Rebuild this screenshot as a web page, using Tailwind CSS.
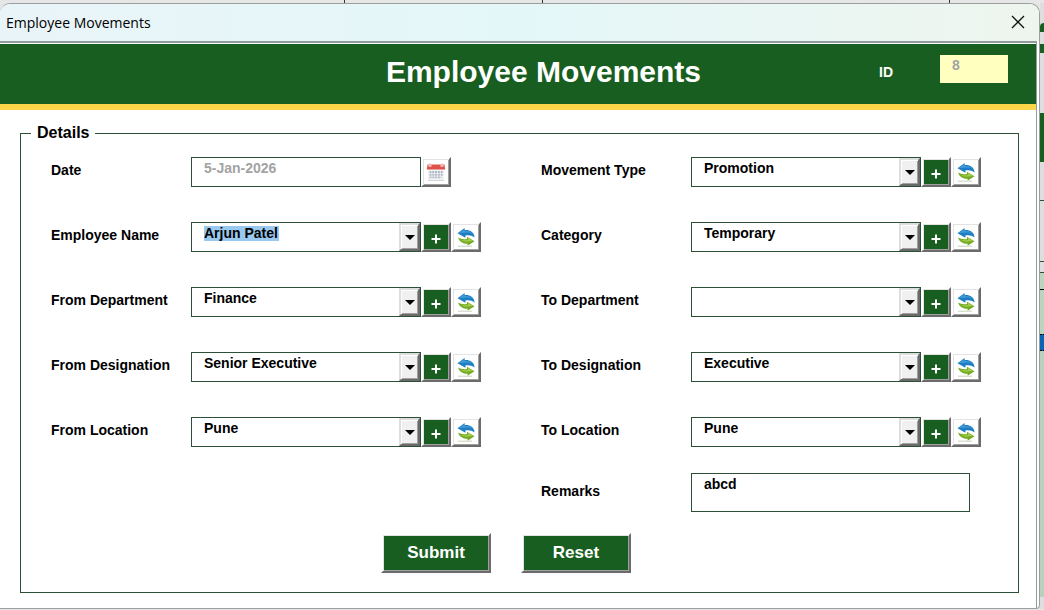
<!DOCTYPE html>
<html lang="en">
<head>
    <meta charset="UTF-8">
    <meta name="viewport" content="width=device-width, initial-scale=1.0">
    <title>Employee Movements</title>
    <script src="https://cdn.jsdelivr.net/npm/@tailwindcss/browser@4"></script>
</head>
<body class="min-h-screen overflow-hidden bg-[#e6e6e6] font-['Liberation_Sans',Arial,sans-serif] text-sm font-bold text-black">
    <!-- Shared icons -->
    <svg class="hidden">
        <symbol id="icon-refresh" viewBox="0 0 20 20">
            <path d="M1.500 6.200 8.600 1v2.200C13 2.600 18.200 4.600 18.600 10.600 16 8.300 13 7.900 9.400 8.400v2.400z" fill="#1f7dc4"/>
            <path d="M2.500 6 8.200 2v2c4-.5 7 .6 9 3-3-1.600-6-1.700-9-1.200z" fill="#3f9ad6"/>
            <path d="M18.500 14.200 11.600 18.800v-2C7.500 16.900 3.500 15.400 2 10.600c3 1.700 6 2 9 1.400V9.800z" fill="#74ab24"/>
            <path d="M17 14l-5-3.200v2.200c-2.500.5-5 .3-7.500-.6 2 1.800 4.500 2.400 7.500 2.200z" fill="#a3cc4a"/>
            <path d="M2 19.200h14" stroke="#b9c8a8" stroke-width=".8"/>
        </symbol>
        <symbol id="icon-arrow" viewBox="0 0 10 5">
            <path d="M0 0h10L5 5z" fill="#000"/>
        </symbol>
        <symbol id="icon-plus" viewBox="0 0 10 10">
            <path d="M5 .5v9M.5 5h9" stroke="#fff" stroke-width="2"/>
        </symbol>
    </svg>

    <!-- Sheet column lines above the window -->
    <div class="flex h-[3px]">
        <div class="w-[33%] border-r border-[#333]"></div>
        <div class="w-[19%] border-r border-[#333]"></div>
        <div class="w-[39%] border-r border-[#333]"></div>
    </div>

    <div class="flex">
        <!-- Window -->
        <div class="min-w-0 flex-1 rounded-t-[10px] rounded-br border-t border-r border-b border-[#9a9f9f] bg-white pr-0.5">
            <header class="-mr-0.5 flex h-[37px] items-center justify-between rounded-t-[10px] bg-linear-to-r from-[#e9f4f9] via-[#e4f7f8] to-[#eef5ee] pr-3.5 pl-1.5">
                <span class="font-['Open_Sans','Noto_Sans',sans-serif] text-sm font-normal">Employee Movements</span>
                <button type="button" aria-label="Close" class="pb-0.5">
                    <svg class="size-3.5" viewBox="0 0 14 14"><path d="M1 1l12 12M13 1 1 13" stroke="#111" stroke-width="1.300" fill="none"/></svg>
                </button>
            </header>

            <main class="border-t-2 border-r border-[#939c9c] pt-px">
                <!-- Title -->
                <div class="flex h-[66px] items-center border-b-[6px] border-[#fcd549] bg-[#185e20] pr-7 text-white">
                    <h1 class="flex-1 pb-1 pl-[208px] text-center text-[30px] leading-8">Employee Movements</h1>
                    <label for="record-id" class="w-[61px] pb-1">ID</label>
                    <input id="record-id" type="text" value="8" disabled class="mb-2.5 h-7 w-[68px] bg-[#ffffc0] px-3 pb-2 text-[#a3a3a3]">
                </div>

                <form class="flow-root">
                    <fieldset class="mt-[13px] mr-[17px] mb-[15px] ml-5 border border-[#2c4f38] pt-3.5 pr-[37px] pb-[19px] pl-[30px]">
                        <legend class="-ml-5 px-1.5 text-base leading-5">Details</legend>

                        <div class="grid grid-cols-[43fr_44fr] gap-x-[60px] gap-y-[35px]">
                            <!-- Date / Movement Type -->
                            <div class="flex items-center">
                                <label for="date" class="w-[140px] pb-1">Date</label>
                                <input id="date" type="text" value="5-Jan-2026" disabled class="h-[30px] min-w-0 flex-1 border border-[#2c4f38] px-3 pb-2 text-[#a3a3a3]">
                                <button type="button" aria-label="Pick date" class="mr-[30px] grid size-[30px] place-items-center border-2 border-white border-r-[#6b6b6b] border-b-[#6b6b6b] bg-white shadow-[inset_1px_1px_#e3e3e3,inset_-1px_-1px_#a0a0a0]">
                                    <svg class="size-5" viewBox="0 0 20 20">
                                        <path d="M2 6h16v12.500H2z" fill="#f3f3f6"/>
                                        <path d="M1.500 2.500h17l.7 5H.8z" fill="#df5248"/>
                                        <path d="M3.500 10h13.500M3.500 12.700h13.500M3.500 15.400h12" stroke="#b0b8c4" stroke-width="1.900" stroke-dasharray="2 .8"/>
                                        <path d="M2 18.500h16" stroke="#d5d5d5"/>
                                        <circle cx="4" cy="3.400" r="1.800" fill="#f1b6ae"/>
                                        <circle cx="16" cy="3.400" r="1.800" fill="#f1b6ae"/>
                                    </svg>
                                </button>
                            </div>
                            <div class="flex items-center">
                                <label for="movement-type" class="w-[150px] pb-1">Movement Type</label>
                                <div class="relative min-w-0 flex-1">
                                    <select id="movement-type" class="block h-[30px] w-full appearance-none border border-[#2c4f38] px-3 pb-2"><option>Promotion</option></select>
                                    <span class="pointer-events-none absolute inset-y-px right-px grid w-[21px] place-items-center border-2 border-[#dedede] border-r-[#6b6b6b] border-b-[#6b6b6b] bg-[#f0f0f0] shadow-[inset_1px_1px_#fff,inset_-1px_-1px_#a0a0a0]"><svg class="h-[5px] w-2.5"><use href="#icon-arrow"/></svg></span>
                                </div>
                                <button type="button" aria-label="Add movement type" class="grid size-[30px] place-items-center border-2 border-white border-r-[#6b6b6b] border-b-[#6b6b6b] bg-[#185e20] shadow-[inset_1px_1px_#e3e3e3,inset_-1px_-1px_#a0a0a0]"><svg class="mt-1 size-2.5"><use href="#icon-plus"/></svg></button>
                                <button type="button" aria-label="Refresh movement types" class="grid size-[30px] place-items-center border-2 border-white border-r-[#6b6b6b] border-b-[#6b6b6b] bg-white shadow-[inset_1px_1px_#e3e3e3,inset_-1px_-1px_#a0a0a0]"><svg class="size-5"><use href="#icon-refresh"/></svg></button>
                            </div>

                            <!-- Employee Name / Category -->
                            <div class="flex items-center">
                                <label for="employee-name" class="w-[140px] pb-1">Employee Name</label>
                                <div class="relative min-w-0 flex-1">
                                    <select id="employee-name" class="block h-[30px] w-full appearance-none border border-[#2c4f38] bg-linear-to-r from-[#99c9ef] to-[#99c9ef] bg-size-[75px_15px] bg-position-[12px_3px] bg-no-repeat px-3 pb-2"><option>Arjun Patel</option></select>
                                    <span class="pointer-events-none absolute inset-y-px right-px grid w-[21px] place-items-center border-2 border-[#dedede] border-r-[#6b6b6b] border-b-[#6b6b6b] bg-[#f0f0f0] shadow-[inset_1px_1px_#fff,inset_-1px_-1px_#a0a0a0]"><svg class="h-[5px] w-2.5"><use href="#icon-arrow"/></svg></span>
                                </div>
                                <button type="button" aria-label="Add employee" class="grid size-[30px] place-items-center border-2 border-white border-r-[#6b6b6b] border-b-[#6b6b6b] bg-[#185e20] shadow-[inset_1px_1px_#e3e3e3,inset_-1px_-1px_#a0a0a0]"><svg class="mt-1 size-2.5"><use href="#icon-plus"/></svg></button>
                                <button type="button" aria-label="Refresh employees" class="grid size-[30px] place-items-center border-2 border-white border-r-[#6b6b6b] border-b-[#6b6b6b] bg-white shadow-[inset_1px_1px_#e3e3e3,inset_-1px_-1px_#a0a0a0]"><svg class="size-5"><use href="#icon-refresh"/></svg></button>
                            </div>
                            <div class="flex items-center">
                                <label for="category" class="w-[150px] pb-1">Category</label>
                                <div class="relative min-w-0 flex-1">
                                    <select id="category" class="block h-[30px] w-full appearance-none border border-[#2c4f38] px-3 pb-2"><option>Temporary</option></select>
                                    <span class="pointer-events-none absolute inset-y-px right-px grid w-[21px] place-items-center border-2 border-[#dedede] border-r-[#6b6b6b] border-b-[#6b6b6b] bg-[#f0f0f0] shadow-[inset_1px_1px_#fff,inset_-1px_-1px_#a0a0a0]"><svg class="h-[5px] w-2.5"><use href="#icon-arrow"/></svg></span>
                                </div>
                                <button type="button" aria-label="Add category" class="grid size-[30px] place-items-center border-2 border-white border-r-[#6b6b6b] border-b-[#6b6b6b] bg-[#185e20] shadow-[inset_1px_1px_#e3e3e3,inset_-1px_-1px_#a0a0a0]"><svg class="mt-1 size-2.5"><use href="#icon-plus"/></svg></button>
                                <button type="button" aria-label="Refresh categories" class="grid size-[30px] place-items-center border-2 border-white border-r-[#6b6b6b] border-b-[#6b6b6b] bg-white shadow-[inset_1px_1px_#e3e3e3,inset_-1px_-1px_#a0a0a0]"><svg class="size-5"><use href="#icon-refresh"/></svg></button>
                            </div>

                            <!-- Department -->
                            <div class="flex items-center">
                                <label for="from-department" class="w-[140px] pb-1">From Department</label>
                                <div class="relative min-w-0 flex-1">
                                    <select id="from-department" class="block h-[30px] w-full appearance-none border border-[#2c4f38] px-3 pb-2"><option>Finance</option></select>
                                    <span class="pointer-events-none absolute inset-y-px right-px grid w-[21px] place-items-center border-2 border-[#dedede] border-r-[#6b6b6b] border-b-[#6b6b6b] bg-[#f0f0f0] shadow-[inset_1px_1px_#fff,inset_-1px_-1px_#a0a0a0]"><svg class="h-[5px] w-2.5"><use href="#icon-arrow"/></svg></span>
                                </div>
                                <button type="button" aria-label="Add from department" class="grid size-[30px] place-items-center border-2 border-white border-r-[#6b6b6b] border-b-[#6b6b6b] bg-[#185e20] shadow-[inset_1px_1px_#e3e3e3,inset_-1px_-1px_#a0a0a0]"><svg class="mt-1 size-2.5"><use href="#icon-plus"/></svg></button>
                                <button type="button" aria-label="Refresh from departments" class="grid size-[30px] place-items-center border-2 border-white border-r-[#6b6b6b] border-b-[#6b6b6b] bg-white shadow-[inset_1px_1px_#e3e3e3,inset_-1px_-1px_#a0a0a0]"><svg class="size-5"><use href="#icon-refresh"/></svg></button>
                            </div>
                            <div class="flex items-center">
                                <label for="to-department" class="w-[150px] pb-1">To Department</label>
                                <div class="relative min-w-0 flex-1">
                                    <select id="to-department" class="block h-[30px] w-full appearance-none border border-[#2c4f38] px-3 pb-2"><option></option></select>
                                    <span class="pointer-events-none absolute inset-y-px right-px grid w-[21px] place-items-center border-2 border-[#dedede] border-r-[#6b6b6b] border-b-[#6b6b6b] bg-[#f0f0f0] shadow-[inset_1px_1px_#fff,inset_-1px_-1px_#a0a0a0]"><svg class="h-[5px] w-2.5"><use href="#icon-arrow"/></svg></span>
                                </div>
                                <button type="button" aria-label="Add to department" class="grid size-[30px] place-items-center border-2 border-white border-r-[#6b6b6b] border-b-[#6b6b6b] bg-[#185e20] shadow-[inset_1px_1px_#e3e3e3,inset_-1px_-1px_#a0a0a0]"><svg class="mt-1 size-2.5"><use href="#icon-plus"/></svg></button>
                                <button type="button" aria-label="Refresh to departments" class="grid size-[30px] place-items-center border-2 border-white border-r-[#6b6b6b] border-b-[#6b6b6b] bg-white shadow-[inset_1px_1px_#e3e3e3,inset_-1px_-1px_#a0a0a0]"><svg class="size-5"><use href="#icon-refresh"/></svg></button>
                            </div>

                            <!-- Designation -->
                            <div class="flex items-center">
                                <label for="from-designation" class="w-[140px] pb-1">From Designation</label>
                                <div class="relative min-w-0 flex-1">
                                    <select id="from-designation" class="block h-[30px] w-full appearance-none border border-[#2c4f38] px-3 pb-2"><option>Senior Executive</option></select>
                                    <span class="pointer-events-none absolute inset-y-px right-px grid w-[21px] place-items-center border-2 border-[#dedede] border-r-[#6b6b6b] border-b-[#6b6b6b] bg-[#f0f0f0] shadow-[inset_1px_1px_#fff,inset_-1px_-1px_#a0a0a0]"><svg class="h-[5px] w-2.5"><use href="#icon-arrow"/></svg></span>
                                </div>
                                <button type="button" aria-label="Add from designation" class="grid size-[30px] place-items-center border-2 border-white border-r-[#6b6b6b] border-b-[#6b6b6b] bg-[#185e20] shadow-[inset_1px_1px_#e3e3e3,inset_-1px_-1px_#a0a0a0]"><svg class="mt-1 size-2.5"><use href="#icon-plus"/></svg></button>
                                <button type="button" aria-label="Refresh from designations" class="grid size-[30px] place-items-center border-2 border-white border-r-[#6b6b6b] border-b-[#6b6b6b] bg-white shadow-[inset_1px_1px_#e3e3e3,inset_-1px_-1px_#a0a0a0]"><svg class="size-5"><use href="#icon-refresh"/></svg></button>
                            </div>
                            <div class="flex items-center">
                                <label for="to-designation" class="w-[150px] pb-1">To Designation</label>
                                <div class="relative min-w-0 flex-1">
                                    <select id="to-designation" class="block h-[30px] w-full appearance-none border border-[#2c4f38] px-3 pb-2"><option>Executive</option></select>
                                    <span class="pointer-events-none absolute inset-y-px right-px grid w-[21px] place-items-center border-2 border-[#dedede] border-r-[#6b6b6b] border-b-[#6b6b6b] bg-[#f0f0f0] shadow-[inset_1px_1px_#fff,inset_-1px_-1px_#a0a0a0]"><svg class="h-[5px] w-2.5"><use href="#icon-arrow"/></svg></span>
                                </div>
                                <button type="button" aria-label="Add to designation" class="grid size-[30px] place-items-center border-2 border-white border-r-[#6b6b6b] border-b-[#6b6b6b] bg-[#185e20] shadow-[inset_1px_1px_#e3e3e3,inset_-1px_-1px_#a0a0a0]"><svg class="mt-1 size-2.5"><use href="#icon-plus"/></svg></button>
                                <button type="button" aria-label="Refresh to designations" class="grid size-[30px] place-items-center border-2 border-white border-r-[#6b6b6b] border-b-[#6b6b6b] bg-white shadow-[inset_1px_1px_#e3e3e3,inset_-1px_-1px_#a0a0a0]"><svg class="size-5"><use href="#icon-refresh"/></svg></button>
                            </div>

                            <!-- Location -->
                            <div class="flex items-center">
                                <label for="from-location" class="w-[140px] pb-1">From Location</label>
                                <div class="relative min-w-0 flex-1">
                                    <select id="from-location" class="block h-[30px] w-full appearance-none border border-[#2c4f38] px-3 pb-2"><option>Pune</option></select>
                                    <span class="pointer-events-none absolute inset-y-px right-px grid w-[21px] place-items-center border-2 border-[#dedede] border-r-[#6b6b6b] border-b-[#6b6b6b] bg-[#f0f0f0] shadow-[inset_1px_1px_#fff,inset_-1px_-1px_#a0a0a0]"><svg class="h-[5px] w-2.5"><use href="#icon-arrow"/></svg></span>
                                </div>
                                <button type="button" aria-label="Add from location" class="grid size-[30px] place-items-center border-2 border-white border-r-[#6b6b6b] border-b-[#6b6b6b] bg-[#185e20] shadow-[inset_1px_1px_#e3e3e3,inset_-1px_-1px_#a0a0a0]"><svg class="mt-1 size-2.5"><use href="#icon-plus"/></svg></button>
                                <button type="button" aria-label="Refresh from locations" class="grid size-[30px] place-items-center border-2 border-white border-r-[#6b6b6b] border-b-[#6b6b6b] bg-white shadow-[inset_1px_1px_#e3e3e3,inset_-1px_-1px_#a0a0a0]"><svg class="size-5"><use href="#icon-refresh"/></svg></button>
                            </div>
                            <div class="flex items-center">
                                <label for="to-location" class="w-[150px] pb-1">To Location</label>
                                <div class="relative min-w-0 flex-1">
                                    <select id="to-location" class="block h-[30px] w-full appearance-none border border-[#2c4f38] px-3 pb-2"><option>Pune</option></select>
                                    <span class="pointer-events-none absolute inset-y-px right-px grid w-[21px] place-items-center border-2 border-[#dedede] border-r-[#6b6b6b] border-b-[#6b6b6b] bg-[#f0f0f0] shadow-[inset_1px_1px_#fff,inset_-1px_-1px_#a0a0a0]"><svg class="h-[5px] w-2.5"><use href="#icon-arrow"/></svg></span>
                                </div>
                                <button type="button" aria-label="Add to location" class="grid size-[30px] place-items-center border-2 border-white border-r-[#6b6b6b] border-b-[#6b6b6b] bg-[#185e20] shadow-[inset_1px_1px_#e3e3e3,inset_-1px_-1px_#a0a0a0]"><svg class="mt-1 size-2.5"><use href="#icon-plus"/></svg></button>
                                <button type="button" aria-label="Refresh to locations" class="grid size-[30px] place-items-center border-2 border-white border-r-[#6b6b6b] border-b-[#6b6b6b] bg-white shadow-[inset_1px_1px_#e3e3e3,inset_-1px_-1px_#a0a0a0]"><svg class="size-5"><use href="#icon-refresh"/></svg></button>
                            </div>
                        </div>

                        <!-- Remarks -->
                        <div class="mt-[26px] grid grid-cols-[43fr_44fr] gap-x-[60px]">
                            <div class="col-start-2 flex items-center pr-[11px]">
                                <label for="remarks" class="w-[150px] pb-1">Remarks</label>
                                <textarea id="remarks" rows="1" class="block h-[39px] min-w-0 flex-1 resize-none border border-[#2c4f38] px-3 leading-5">abcd</textarea>
                            </div>
                        </div>

                        <!-- Actions -->
                        <div class="mt-[21px] flex justify-center gap-[30px] pr-5">
                            <button type="submit" class="h-10 w-[110px] border-2 border-white border-r-[#6b6b6b] border-b-[#6b6b6b] bg-[#185e20] text-[17px] text-white shadow-[inset_1px_1px_#e3e3e3,inset_-1px_-1px_#a0a0a0]">Submit</button>
                            <button type="reset" class="h-10 w-[110px] border-2 border-white border-r-[#6b6b6b] border-b-[#6b6b6b] bg-[#185e20] text-[17px] text-white shadow-[inset_1px_1px_#e3e3e3,inset_-1px_-1px_#a0a0a0]">Reset</button>
                        </div>
                    </fieldset>
                </form>
            </main>
        </div>

        <!-- Sheet showing past the window's right edge -->
        <div class="flex w-1 flex-col bg-[#dedede]">
            <div class="mt-5 h-[9px] rounded-tl bg-[#185e20]"></div>
            <div class="mt-3 h-[9px] bg-[#185e20]"></div>
            <div class="mt-[60px] h-[49px] bg-[#185e20]"></div>
            <div class="h-[39px] border-b border-[#2c4f38]"></div>
            <div class="h-[60px]"></div>
            <div class="h-[11px] border-t border-[#2c4f38]"></div>
            <div class="h-[17px] border-t border-[#2c4f38] bg-[#bcd3be]"></div>
            <div class="h-[45px] border-t border-black bg-[#bcd3be]"></div>
            <div class="h-[17px] border-y border-dotted border-black bg-[#0b64b4]"></div>
            <div class="flex-1 bg-[#b9d0bf]"></div>
            <div class="h-3"></div>
        </div>
    </div>
</body>
</html>
